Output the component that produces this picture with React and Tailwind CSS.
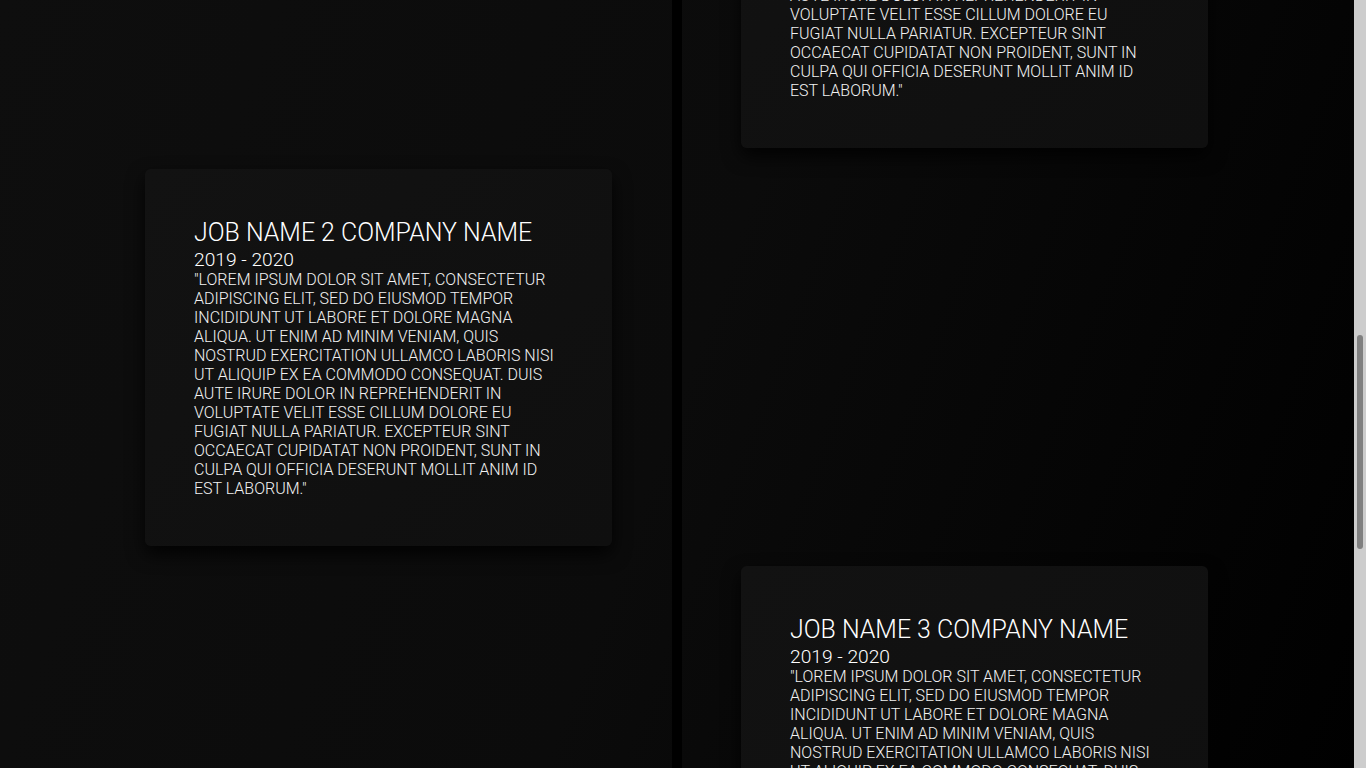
import React, { useLayoutEffect, useRef } from "react";

const lorem =
  '"Lorem ipsum dolor sit amet, consectetur adipiscing elit, sed do eiusmod tempor incididunt ut labore et dolore magna aliqua. Ut enim ad minim veniam, quis nostrud exercitation ullamco laboris nisi ut aliquip ex ea commodo consequat. Duis aute irure dolor in reprehenderit in voluptate velit esse cillum dolore eu fugiat nulla pariatur. Excepteur sint occaecat cupidatat non proident, sunt in culpa qui officia deserunt mollit anim id est laborum."';

const jobs = [
  { title: "Job name 1 Company name", years: "2019 - 2020", side: "right" },
  { title: "Job name 2 Company name", years: "2019 - 2020", side: "left" },
  { title: "Job name 3 Company name", years: "2019 - 2020", side: "right" },
  { title: "Job name 4 Company name", years: "2019 - 2020", side: "left" },
];

function JobCard({ job }) {
  return (
    <div className="w-[467px] rounded-md bg-[linear-gradient(135deg,#121212,#0f0f0f)] px-[49px] pt-12 pb-12 uppercase shadow-[0_8px_18px_rgba(0,0,0,0.85)]">
      <h3 className="text-[24.9px] leading-[32px] font-light text-white">{job.title}</h3>
      <p className="text-[19.2px] leading-[21px] font-light text-white">{job.years}</p>
      <p className="text-[16px] leading-[19px] font-light text-[#f2f2f2]">{lorem}</p>
    </div>
  );
}

function TimelineRow({ job }) {
  const left = job.side === "left";
  return (
    <div className="flex">
      <div className="flex w-[672px] justify-end pr-[60px]">{left && <JobCard job={job} />}</div>
      <div className="w-[10px] shrink-0" />
      <div className="flex w-[672px] justify-start pl-[59px]">{!left && <JobCard job={job} />}</div>
    </div>
  );
}

export default function App() {
  const scroller = useRef(null);

  useLayoutEffect(() => {
    if (scroller.current) scroller.current.scrollTop = 229;
  }, []);

  return (
    <div
      className="flex h-screen w-full overflow-hidden bg-[linear-gradient(110deg,#0e0e0e_0%,#0b0b0b_50%,#000000_100%)]"
      style={{ fontFamily: "Roboto, 'Open Sans', sans-serif" }}
    >
      <div
        ref={scroller}
        className="relative h-full flex-1 overflow-y-scroll [scrollbar-width:none]"
      >
        <div className="relative flex flex-col gap-[20px] pb-40">
          <div className="absolute top-0 bottom-0 left-[672px] w-[10px] bg-black" />
          {jobs.map((job, i) => (
            <div key={i} className={i === 0 ? "relative pb-px" : "relative"}>
              <TimelineRow job={job} />
            </div>
          ))}
        </div>
      </div>
      <div className="flex h-full w-[12px] shrink-0 justify-center bg-[#cdcdcd]">
        <div className="mt-[335px] h-[214px] w-[6px] rounded-full bg-[#808080]" />
      </div>
    </div>
  );
}
